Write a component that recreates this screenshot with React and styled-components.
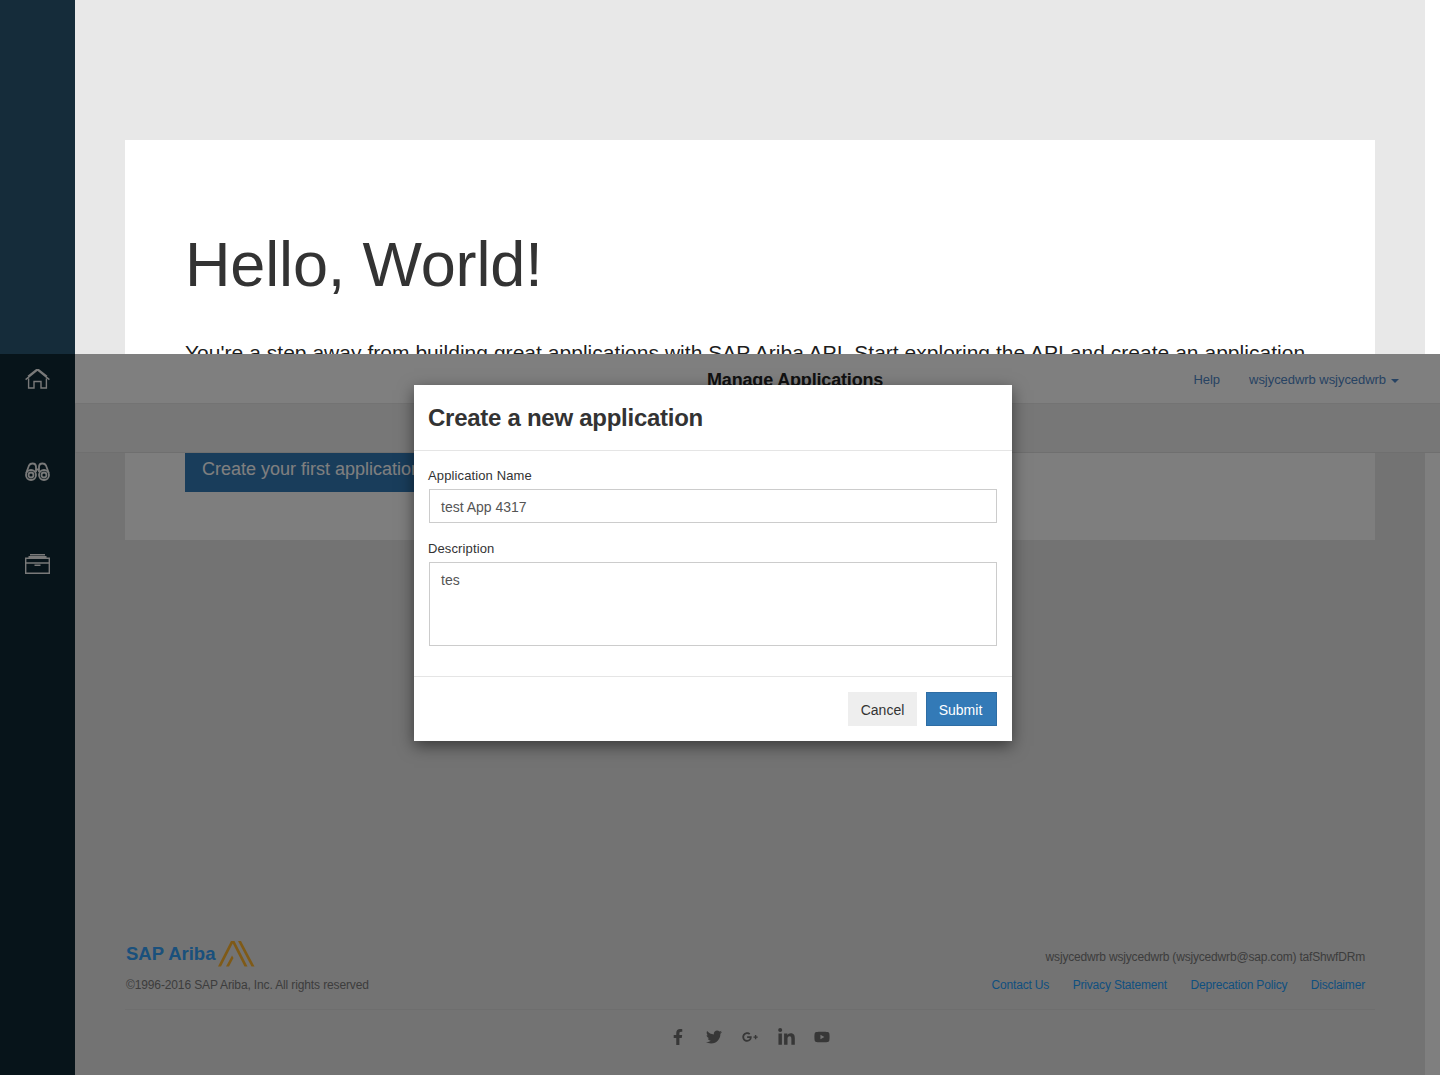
import React from "react";
import styled, { createGlobalStyle } from "styled-components";
import { FaFacebookF, FaTwitter, FaGooglePlusG, FaLinkedinIn, FaYoutube } from "react-icons/fa";

const Global = createGlobalStyle`
  html, body { margin: 0; padding: 0; background: #fff; }
  * { box-sizing: border-box; }
  body { font-family: "Liberation Sans", Arial, sans-serif; color: #333; }
`;

const Page = styled.div`
  width: 1440px;
  height: 1075px;
  overflow: hidden;
`;

const UpperLayer = styled.div`
  height: 354px;
  display: flex;
  overflow: hidden;
`;

const UpperSidebar = styled.div`
  width: 75px;
  flex: none;
  background: #152c3a;
`;

const Backdrop = styled.div`
  flex: 1;
  background: #e8e8e8;
  padding: 140px 50px 0;
`;

const Gutter = styled.div`
  width: 15px;
  flex: none;
  background: #fff;
`;

const Jumbotron = styled.div`
  background: #fff;
  height: 400px;
  padding: 90px 60px 0;
`;

const Hello = styled.h1`
  margin: 0;
  font-size: 63px;
  line-height: 69px;
  font-weight: 400;
  letter-spacing: -0.15px;
  color: #333;
`;

const Lead = styled.p`
  margin: 39px 0 0;
  font-size: 21px;
  line-height: 30px;
  letter-spacing: 0.03px;
  color: #1d1d1d;
  white-space: nowrap;
`;

const LowerLayer = styled.div`
  position: relative;
  height: 721px;
  display: flex;
`;

const Sidebar = styled.nav`
  width: 75px;
  flex: none;
  background: #0e2834;
  display: flex;
  flex-direction: column;
  align-items: center;
  padding-top: 15px;
  gap: 72.5px;
  color: #f2f2f2;
`;

const SideIcon = styled.svg`
  width: 25px;
  height: 20px;
  fill: none;
  stroke: currentColor;
  stroke-width: ${(p) => p.$weight}px;
  display: block;
`;

const Shell = styled.div`
  flex: 1;
  display: flex;
  flex-direction: column;
  min-width: 0;
`;

const Navbar = styled.header`
  height: 50px;
  background: #fff;
  border-bottom: 1px solid #e7e7e7;
  display: flex;
  align-items: flex-start;
  padding-right: 41px;
`;

const NavTitle = styled.div`
  margin-left: 632px;
  height: 31px;
  overflow: hidden;
  font-size: 18px;
  line-height: 52px;
  font-weight: 700;
  letter-spacing: -0.17px;
  color: #222;
  white-space: nowrap;
`;

const NavLinks = styled.div`
  margin-left: auto;
  display: flex;
  align-items: center;
  gap: 29px;
  height: 50px;
  font-size: 13px;
  letter-spacing: -0.05px;
  color: #4f86c6;
`;

const Caret = styled.span`
  display: inline-block;
  margin-left: 5px;
  margin-top: 1px;
  vertical-align: middle;
  border-top: 4px solid currentColor;
  border-left: 4px solid transparent;
  border-right: 4px solid transparent;
`;

const SubBar = styled.div`
  height: 49px;
  background: #eee;
  border-left: 1px solid #e4e4e4;
  border-bottom: 1px solid #dedede;
`;

const Body = styled.div`
  flex: 1;
  display: flex;
  min-height: 0;
`;

const Workspace = styled.main`
  flex: 1;
  background: #e6e6e6;
  padding: 0 50px 24px;
  display: flex;
  flex-direction: column;
`;

const Card = styled.section`
  height: 87px;
  background: #fdfdfd;
  padding: 0 60px;
`;

const PrimaryLarge = styled.div`
  width: 290px;
  height: 39px;
  background: #337ab7;
  color: #fff;
  font-size: 18px;
  line-height: 33px;
  padding-left: 17px;
  white-space: nowrap;
`;

const Footer = styled.footer`
  margin-top: auto;
`;

const FooterGrid = styled.div`
  display: grid;
  grid-template-columns: auto auto;
  grid-template-rows: 34px 18px;
  row-gap: 2px;
  justify-content: space-between;
  padding: 0 10px 15px 1px;
  border-bottom: 1px solid #dcdcdc;
  font-size: 12px;
  letter-spacing: -0.18px;
  color: #7a7a7a;
`;

const Brand = styled.div`
  display: flex;
  align-items: flex-start;
  gap: 3px;
  font-size: 18.5px;
  line-height: 27px;
  font-weight: 700;
  letter-spacing: 0;
  color: #34a0f8;
`;

const Muted = styled.div`
  align-self: center;
  justify-self: end;
  white-space: nowrap;
  line-height: 18px;
`;

const Copyright = styled.div`
  letter-spacing: -0.13px;
  line-height: 18px;
`;

const FooterLinks = styled.div`
  display: flex;
  gap: 23.5px;
  line-height: 18px;
  color: #1ea0ff;
`;

const Socials = styled.div`
  margin-top: 13px;
  height: 28px;
  display: flex;
  justify-content: center;
  align-items: center;
  color: #6e6e6e;
`;

const SocialCell = styled.span`
  width: 36px;
  display: flex;
  justify-content: center;
  font-size: ${(p) => p.$size}px;
`;

const Scrim = styled.div`
  position: absolute;
  inset: 0;
  background: rgba(0, 0, 0, 0.5);
`;

const Modal = styled.div`
  position: absolute;
  top: 31px;
  left: 414px;
  width: 598px;
  height: 356px;
  background: #fff;
  box-shadow: 0 5px 15px rgba(0, 0, 0, 0.5);
  display: flex;
  flex-direction: column;
`;

const ModalHeader = styled.div`
  height: 66px;
  padding: 0 15px;
  border-bottom: 1px solid #e5e5e5;
  display: flex;
  align-items: center;
`;

const ModalTitle = styled.h4`
  margin: 0 0 0 -1px;
  font-size: 24px;
  font-weight: 700;
  letter-spacing: -0.27px;
  color: #333;
`;

const ModalBody = styled.div`
  flex: 1;
  padding: 15px 15px 0;
`;

const Field = styled.div`
  margin-bottom: ${(p) => p.$gap}px;
`;

const Label = styled.label`
  display: block;
  margin-left: -1px;
  margin-bottom: 3px;
  font-size: 13px;
  line-height: 20px;
  letter-spacing: 0.12px;
  color: #333;
`;

const TextInput = styled.div`
  height: ${(p) => p.$h}px;
  border: 1px solid #ccc;
  padding: ${(p) => p.$pad}px 11px;
  font-size: 14px;
  line-height: 20px;
  color: #555;
`;

const ModalFooter = styled.div`
  height: 65px;
  border-top: 1px solid #e5e5e5;
  padding: 15px;
  display: flex;
  justify-content: flex-end;
  gap: 9px;
`;

const Button = styled.button`
  height: 34px;
  width: ${(p) => p.$w}px;
  padding: 2px ${(p) => (p.$primary ? 2 : 0)}px 0 0;
  border: 1px solid ${(p) => (p.$primary ? "#2e6da4" : "#eee")};
  background: ${(p) => (p.$primary ? "#337ab7" : "#eee")};
  color: ${(p) => (p.$primary ? "#fff" : "#333")};
  font-family: inherit;
  font-size: 14px;
`;

const LogoMark = styled.svg`
  width: 37px;
  height: 27px;
  flex: none;
`;

export default function App() {
  return (
    <Page>
      <Global />
      <UpperLayer>
        <UpperSidebar />
        <Backdrop>
          <Jumbotron>
            <Hello>Hello, World!</Hello>
            <Lead>You're a step away from building great applications with SAP Ariba API. Start exploring the API and create an application</Lead>
          </Jumbotron>
        </Backdrop>
        <Gutter />
      </UpperLayer>
      <LowerLayer>
        <Sidebar>
          <SideIcon $weight={1.4} viewBox="0 0 25 20">
            <path d="M0.6 10.6 12.5 1 24.4 10.6 M3.6 9.5V19H9V12.5H16V19H21.4V9.5 M3 7.3 12.5 -0.2 22 7.3" />
          </SideIcon>
          <SideIcon $weight={1.8} viewBox="0 0 25 20">
            <circle cx="6" cy="13" r="5" />
            <circle cx="19" cy="13" r="5" />
            <circle cx="6" cy="13" r="2.5" />
            <circle cx="19" cy="13" r="2.5" />
            <path d="M1.200 11 4 3.500Q5 1.500 7.500 1.500 11 1.500 11 5V10 M23.800 11 21 3.500Q20 1.500 17.500 1.500 14 1.500 14 5V10 M11 7.500H14" />
          </SideIcon>
          <SideIcon $weight={1.4} viewBox="0 0 25 20">
            <path d="M0.7 4.200H24.300V19.300H0.700Z M0.700 9H24.300 M9.500 11.200H15.500 M3.500 2.700H21.500 M5 0.800H20" />
          </SideIcon>
        </Sidebar>
        <Shell>
          <Navbar>
            <NavTitle>Manage Applications</NavTitle>
            <NavLinks>
              <span>Help</span>
              <span>wsjycedwrb wsjycedwrb<Caret /></span>
            </NavLinks>
          </Navbar>
          <SubBar />
          <Body>
            <Workspace>
              <Card>
                <PrimaryLarge>Create your first application</PrimaryLarge>
              </Card>
              <Footer>
                <FooterGrid>
                  <Brand>
                    SAP Ariba
                    <LogoMark viewBox="0 0 37 27">
                      <path fill="#ffb52e" d="M0 26.500 13 1H16L3 26.500Z M8 26.500 14 15.500 15.500 18 11 26.500Z M13.500 1H16.500L29.500 26.500H26.500Z M20 1H23L36.500 26.500H33.500Z" />
                    </LogoMark>
                  </Brand>
                  <Muted>wsjycedwrb wsjycedwrb (wsjycedwrb@sap.com) tafShwfDRm</Muted>
                  <Copyright>©1996-2016 SAP Ariba, Inc. All rights reserved</Copyright>
                  <FooterLinks>
                    <span>Contact Us</span>
                    <span>Privacy Statement</span>
                    <span>Deprecation Policy</span>
                    <span>Disclaimer</span>
                  </FooterLinks>
                </FooterGrid>
                <Socials>
                  <SocialCell $size={16}><FaFacebookF /></SocialCell>
                  <SocialCell $size={16}><FaTwitter /></SocialCell>
                  <SocialCell $size={16}><FaGooglePlusG /></SocialCell>
                  <SocialCell $size={19}><FaLinkedinIn /></SocialCell>
                  <SocialCell $size={16}><FaYoutube /></SocialCell>
                </Socials>
              </Footer>
            </Workspace>
            <Gutter />
          </Body>
        </Shell>
        <Scrim />
        <Modal>
          <ModalHeader>
            <ModalTitle>Create a new application</ModalTitle>
          </ModalHeader>
          <ModalBody>
            <Field $gap={16}>
              <Label>Application Name</Label>
              <TextInput $h={34} $pad={7}>test App 4317</TextInput>
            </Field>
            <Field $gap={0}>
              <Label>Description</Label>
              <TextInput $h={84} $pad={7}>tes</TextInput>
            </Field>
          </ModalBody>
          <ModalFooter>
            <Button $w={69}>Cancel</Button>
            <Button $w={71} $primary>Submit</Button>
          </ModalFooter>
        </Modal>
      </LowerLayer>
    </Page>
  );
}
